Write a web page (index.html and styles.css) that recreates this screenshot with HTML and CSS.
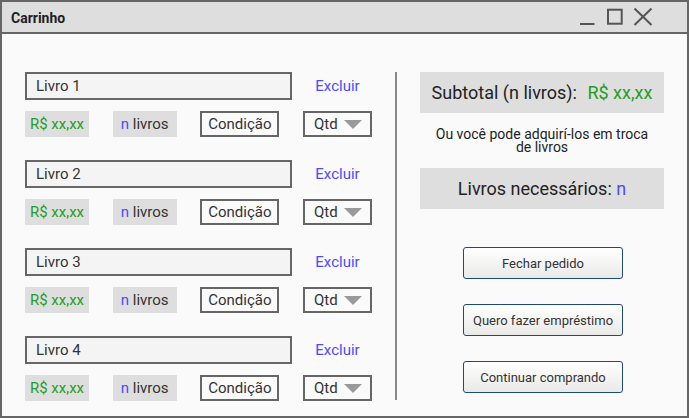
FILE: index.html
```html
<!DOCTYPE html>
<html lang="pt">
<head>
<meta charset="utf-8">
<title>Carrinho</title>
<link rel="stylesheet" href="styles.css">
</head>
<body>
<div class="window">
  <div class="titlebar">
    <span class="title">Carrinho</span>
    <svg class="controls" width="76" height="30" viewBox="0 0 76 30" aria-hidden="true">
      <line x1="2" y1="22" x2="16.5" y2="22" stroke="#555" stroke-width="2"/>
      <rect x="30" y="7.7" width="13.7" height="14" fill="none" stroke="#555" stroke-width="2"/>
      <line x1="56.5" y1="6.5" x2="73.5" y2="23" stroke="#555" stroke-width="2"/>
      <line x1="73.5" y1="6.5" x2="56.5" y2="23" stroke="#555" stroke-width="2"/>
    </svg>
  </div>
  <div class="content">
    <div class="items">
      <div class="item">
        <div class="item-top">
          <div class="book-input">Livro 1</div>
          <a class="delete">Excluir</a>
        </div>
        <div class="item-info">
          <div class="price">R$ xx,xx</div>
          <div class="count"><span><span class="blue">n</span> livros</span></div>
          <div class="cond">Condição</div>
          <div class="qtd">Qtd <span class="caret"></span></div>
        </div>
      </div>
      <div class="item">
        <div class="item-top">
          <div class="book-input">Livro 2</div>
          <a class="delete">Excluir</a>
        </div>
        <div class="item-info">
          <div class="price">R$ xx,xx</div>
          <div class="count"><span><span class="blue">n</span> livros</span></div>
          <div class="cond">Condição</div>
          <div class="qtd">Qtd <span class="caret"></span></div>
        </div>
      </div>
      <div class="item">
        <div class="item-top">
          <div class="book-input">Livro 3</div>
          <a class="delete">Excluir</a>
        </div>
        <div class="item-info">
          <div class="price">R$ xx,xx</div>
          <div class="count"><span><span class="blue">n</span> livros</span></div>
          <div class="cond">Condição</div>
          <div class="qtd">Qtd <span class="caret"></span></div>
        </div>
      </div>
      <div class="item">
        <div class="item-top">
          <div class="book-input">Livro 4</div>
          <a class="delete">Excluir</a>
        </div>
        <div class="item-info">
          <div class="price">R$ xx,xx</div>
          <div class="count"><span><span class="blue">n</span> livros</span></div>
          <div class="cond">Condição</div>
          <div class="qtd">Qtd <span class="caret"></span></div>
        </div>
      </div>
    </div>
    <div class="divider"></div>
    <div class="summary">
      <div class="total-box"><span>Subtotal (n livros): <span class="green">R$ xx,xx</span></span></div>
      <p class="note">Ou você pode adquirí-los em troca de livros</p>
      <div class="total-box"><span>Livros necessários: <span class="blue">n</span></span></div>
      <div class="actions">
        <button class="btn">Fechar pedido</button>
        <button class="btn">Quero fazer empréstimo</button>
        <button class="btn">Continuar comprando</button>
      </div>
    </div>
  </div>
</div>
</body>
</html>
```
FILE: styles.css
```css
html, body {
  margin: 0;
  padding: 0;
}
body {
  font-family: Roboto, "Liberation Sans", sans-serif;
  color: #222;
  background: #fafafa;
}
.window {
  width: 689px;
  height: 418px;
  box-sizing: border-box;
  border: 2px solid #666;
  background: #fafafa;
  display: flex;
  flex-direction: column;
}
.titlebar {
  height: 30px;
  flex: none;
  background: #dedede;
  border-bottom: 2px solid #666;
  display: flex;
  align-items: center;
  padding-left: 9px;
  padding-right: 33px;
}
.title {
  font-size: 14px;
  font-weight: 700;
  color: #1e1e1e;
  margin-top: 1px;
}
.controls {
  margin-left: auto;
  display: block;
}
.content {
  flex: 1;
  display: flex;
  padding: 38px 23px 0 23px;
}
.items {
  width: 347px;
  display: flex;
  flex-direction: column;
  gap: 23px;
  align-self: flex-start;
}
.item-top {
  display: flex;
  align-items: center;
  height: 28px;
  margin-bottom: 11px;
}
.book-input {
  width: 267px;
  height: 28px;
  box-sizing: border-box;
  border: 2px solid #666;
  background: #f4f4f4;
  font-size: 15px;
  color: #333;
  padding-left: 9px;
  display: flex;
  align-items: center;
}
.delete {
  margin-left: auto;
  width: 69px;
  text-align: center;
  font-size: 15px;
  color: #4b4bff;
  cursor: pointer;
}
.item-info {
  display: flex;
  justify-content: space-between;
  height: 26px;
}
.item-info > div {
  height: 26px;
  box-sizing: border-box;
  display: flex;
  align-items: center;
  justify-content: center;
  font-size: 15px;
  color: #333;
}
.item-info > .price {
  width: 64px;
  background: #dedede;
  color: #1f9e1f;
}
.count {
  width: 64px;
  background: #dedede;
}
.cond {
  width: 79px;
  border: 2px solid #666;
  background: #fafafa;
}
.item-info > .qtd {
  width: 69px;
  border: 2px solid #666;
  background: #fafafa;
  justify-content: flex-start;
  padding-left: 9px;
}
.caret {
  display: inline-block;
  width: 0;
  height: 0;
  border-left: 9.5px solid transparent;
  border-right: 9.5px solid transparent;
  border-top: 9px solid #9a9a9a;
  margin-left: 6px;
}
.blue {
  color: #4b4bff;
}
.green {
  color: #1f9e1f;
  margin-left: 6px;
}
.divider {
  width: 2px;
  background: #888;
  margin: 0 23px 16px 23px;
}
.summary {
  width: 244px;
  display: flex;
  flex-direction: column;
}
.total-box {
  height: 41px;
  background: #dedede;
  display: flex;
  align-items: center;
  justify-content: center;
  font-size: 18px;
  color: #222;
}
.note {
  margin: 15px 0 14px 0;
  font-size: 14px;
  line-height: 13px;
  text-align: center;
  color: #222;
  padding: 0 10px;
}
.actions {
  margin-top: 38px;
  display: flex;
  flex-direction: column;
  align-items: center;
  gap: 25px;
}
.btn {
  width: 160px;
  height: 32px;
  box-sizing: border-box;
  border: 1px solid #1e4a7a;
  border-radius: 3px;
  background: linear-gradient(#ffffff, #e9e9e7);
  font-family: Roboto, "Liberation Sans", sans-serif;
  font-size: 13px;
  color: #333;
  padding: 0;
  margin-left: 2px;
}
```
